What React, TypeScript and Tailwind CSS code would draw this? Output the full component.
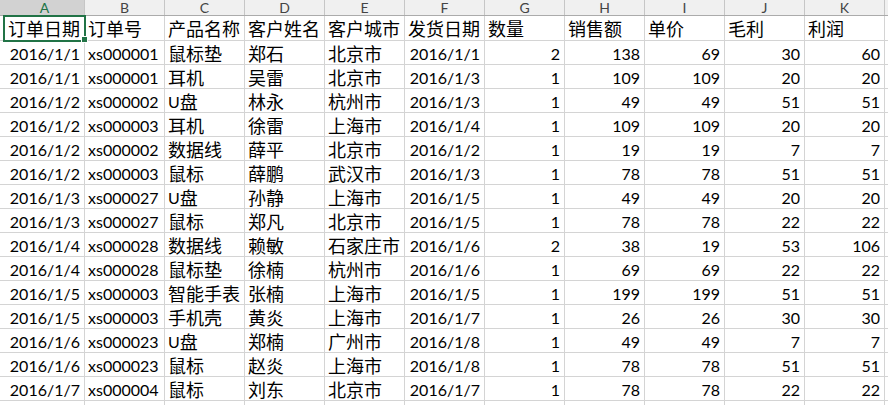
import React from "react";

const COLS = ["A", "B", "C", "D", "E", "F", "G", "H", "I", "J", "K"];
const TITLES = ["订单日期", "订单号", "产品名称", "客户姓名", "客户城市", "发货日期", "数量", "销售额", "单价", "毛利", "利润"];
const RIGHT = [true, false, false, false, false, true, true, true, true, true, true];

const DATA: string[][] = [
  ["2016/1/1", "xs000001", "鼠标垫", "郑石", "北京市", "2016/1/1", "2", "138", "69", "30", "60"],
  ["2016/1/1", "xs000001", "耳机", "吴雷", "北京市", "2016/1/3", "1", "109", "109", "20", "20"],
  ["2016/1/2", "xs000002", "U盘", "林永", "杭州市", "2016/1/3", "1", "49", "49", "51", "51"],
  ["2016/1/2", "xs000003", "耳机", "徐雷", "上海市", "2016/1/4", "1", "109", "109", "20", "20"],
  ["2016/1/2", "xs000002", "数据线", "薛平", "北京市", "2016/1/2", "1", "19", "19", "7", "7"],
  ["2016/1/2", "xs000003", "鼠标", "薛鹏", "武汉市", "2016/1/3", "1", "78", "78", "51", "51"],
  ["2016/1/3", "xs000027", "U盘", "孙静", "上海市", "2016/1/5", "1", "49", "49", "20", "20"],
  ["2016/1/3", "xs000027", "鼠标", "郑凡", "北京市", "2016/1/5", "1", "78", "78", "22", "22"],
  ["2016/1/4", "xs000028", "数据线", "赖敏", "石家庄市", "2016/1/6", "2", "38", "19", "53", "106"],
  ["2016/1/4", "xs000028", "鼠标垫", "徐楠", "杭州市", "2016/1/6", "1", "69", "69", "22", "22"],
  ["2016/1/5", "xs000003", "智能手表", "张楠", "上海市", "2016/1/5", "1", "199", "199", "51", "51"],
  ["2016/1/5", "xs000003", "手机壳", "黄炎", "上海市", "2016/1/7", "1", "26", "26", "30", "30"],
  ["2016/1/6", "xs000023", "U盘", "郑楠", "广州市", "2016/1/8", "1", "49", "49", "7", "7"],
  ["2016/1/6", "xs000023", "鼠标", "赵炎", "上海市", "2016/1/8", "1", "78", "78", "51", "51"],
  ["2016/1/7", "xs000004", "鼠标", "刘东", "北京市", "2016/1/7", "1", "78", "78", "22", "22"],
  ["2016/1/7", "xs000004", "数据线", "刘东", "北京市", "2016/1/9", "1", "19", "19", "7", "7"],
];

function renderText(v: string) {
  const parts = v.split(/([\u4e00-\u9fff]+)/).filter((p) => p.length > 0);
  return parts.map((p, i) =>
    /[\u4e00-\u9fff]/.test(p) ? (
      <span key={i} className="text-[18px]">
        {p}
      </span>
    ) : (
      <span key={i}>{p}</span>
    )
  );
}

function Cell({ v, right }: { v: string; right: boolean }) {
  return (
    <div
      className={
        right
          ? "w-[80px] shrink-0 h-full border-r border-[#d4d4d4] flex items-center justify-end px-[4px] pt-[2px] overflow-hidden whitespace-nowrap"
          : "w-[80px] shrink-0 h-full border-r border-[#d4d4d4] flex items-center justify-start px-[3px] pt-[2px] overflow-hidden whitespace-nowrap"
      }
    >
      {renderText(v)}
    </div>
  );
}

export default function App() {
  return (
    <div className="relative w-[888px] h-[405px] overflow-hidden bg-white text-black font-[Lato,'Noto_Sans_CJK_SC',sans-serif] text-[16px] leading-none">
      {/* column header */}
      <div className="flex h-[16px] bg-[#f0f0f0] border-b border-[#ababab]">
        <div className="w-[5px] shrink-0 bg-[#d2d2d2]" />
        {COLS.map((c, i) => (
          <div
            key={c}
            className={
              i === 0
                ? "w-[80px] shrink-0 h-full bg-[#d2d2d2] border-r border-[#c6c6c6] flex justify-center items-center text-[#217346] text-[14px] leading-[15px] font-[Lato,sans-serif]"
                : "w-[80px] shrink-0 h-full border-r border-[#c6c6c6] flex justify-center items-center text-[#444444] text-[14px] leading-[15px] font-[Lato,sans-serif]"
            }
          >
            {c}
          </div>
        ))}
        <div className="flex-1" />
      </div>
      {/* title row */}
      <div className="flex h-[25px] border-b border-[#d4d4d4]">
        <div className="w-[5px] shrink-0" />
        {TITLES.map((t, i) => (
          <Cell key={i} v={t} right={false} />
        ))}
        <div className="flex-1" />
      </div>
      {DATA.map((row, r) => (
        <div key={r} className="flex h-[24px] border-b border-[#d4d4d4]">
          <div className="w-[5px] shrink-0" />
          {row.map((v, i) => (
            <Cell key={i} v={v} right={RIGHT[i]} />
          ))}
          <div className="flex-1" />
        </div>
      ))}
      {/* selection */}
      <div className="absolute left-[3px] top-[15px] w-[83px] h-[27px] border-2 border-[#217346] pointer-events-none" />
      <div className="absolute left-[81px] top-[36px] w-[7px] h-[7px] bg-[#217346] border border-white pointer-events-none" />
    </div>
  );
}
